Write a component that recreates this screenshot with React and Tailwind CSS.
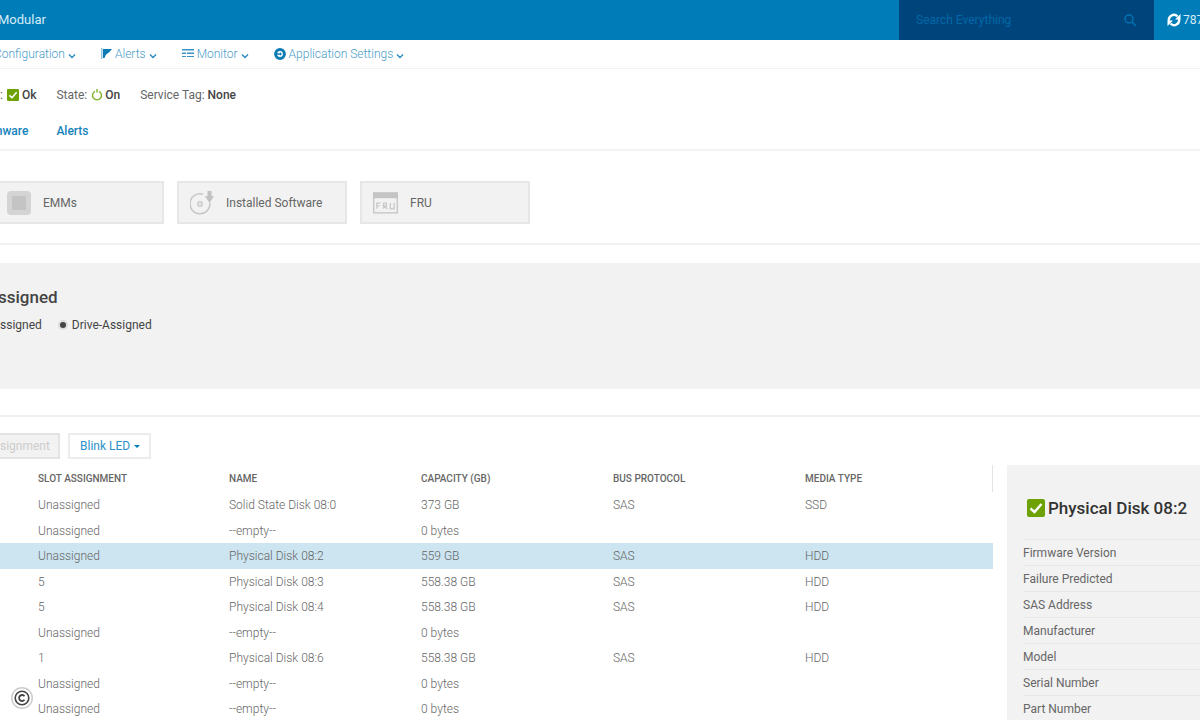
import { useState } from 'react';

const NAV_ITEMS = [
    { label: 'Configuration', icon: null },
    { label: 'Alerts', icon: 'flag' },
    { label: 'Monitor', icon: 'monitor' },
    { label: 'Application Settings', icon: 'settings' },
];

const COLUMNS = ['Slot Assignment', 'Name', 'Capacity (GB)', 'Bus Protocol', 'Media Type'];

const DISKS = [
    ['Unassigned', 'Solid State Disk 08:0', '373 GB', 'SAS', 'SSD'],
    ['Unassigned', '--empty--', '0 bytes', '', ''],
    ['Unassigned', 'Physical Disk 08:2', '559 GB', 'SAS', 'HDD'],
    ['5', 'Physical Disk 08:3', '558.38 GB', 'SAS', 'HDD'],
    ['5', 'Physical Disk 08:4', '558.38 GB', 'SAS', 'HDD'],
    ['Unassigned', '--empty--', '0 bytes', '', ''],
    ['1', 'Physical Disk 08:6', '558.38 GB', 'SAS', 'HDD'],
    ['Unassigned', '--empty--', '0 bytes', '', ''],
    ['Unassigned', '--empty--', '0 bytes', '', ''],
];

const DETAILS = [
    'Firmware Version',
    'Failure Predicted',
    'SAS Address',
    'Manufacturer',
    'Model',
    'Serial Number',
    'Part Number',
];

function NavIcon({ name }) {
    if (name === 'flag') {
        return (
            <svg className="w-[11px] h-3 mr-[3px]" viewBox="0 0 11 12" fill="#0a7bb5" aria-hidden="true">
                <path d="M0 0h1.5v11H0z" opacity=".45" />
                <path d="M2 1h9L8 4.5 5 6.5 3.5 10H2z" />
            </svg>
        );
    }
    if (name === 'monitor') {
        return (
            <svg className="w-3 h-3 mr-[3px]" viewBox="0 0 12 12" fill="#3a93c2" aria-hidden="true">
                <path d="M0 1h12v1.5H0zM0 4.5h4V6H0zM5 4.5h7V6H5zM0 8h4v1H0zM5 8h7v1H5z" />
            </svg>
        );
    }
    return (
        <svg className="w-3 h-3 mr-[3px]" viewBox="0 0 12 12" aria-hidden="true">
            <circle cx="6" cy="6" r="4.4" fill="#fff" stroke="#0a7bb5" strokeWidth="3" />
            <path d="M3 5.3h3V4.200L8 6 6 7.800V6.700H3z" fill="#0a7bb5" />
        </svg>
    );
}

function Chevron() {
    return (
        <svg className="w-2 h-2 ml-[3px] mt-1" viewBox="0 0 8 8" fill="none" stroke="#2a8abf" strokeWidth="1.4" aria-hidden="true">
            <path d="M1 2.5l3 3 3-3" />
        </svg>
    );
}

function OkIcon({ className }) {
    return (
        <svg className={className} viewBox="0 0 18 18" aria-hidden="true">
            <rect width="18" height="18" rx="2" fill="#6ea204" />
            <path d="M3.5 9.5l4 3.5 7-8" fill="none" stroke="#fff" strokeWidth="2.4" />
        </svg>
    );
}

function ChipIcon() {
    return (
        <svg className="size-6" viewBox="0 0 24 24" aria-hidden="true">
            <rect width="24" height="24" rx="4" fill="#d4d4d4" />
            <rect x="5" y="5" width="14" height="14" fill="#c4c4c4" />
        </svg>
    );
}

function DiscIcon() {
    return (
        <svg className="size-6" viewBox="0 0 24 24" fill="none" stroke="#c6c6c6" aria-hidden="true">
            <path d="M13 3.2A10 10 0 1 0 20 12" strokeWidth="1.5" />
            <circle cx="10" cy="13" r="2.3" strokeWidth="1.2" />
            <circle cx="10" cy="13" r=".8" fill="#c6c6c6" stroke="none" />
            <path d="M17.500 0h4v5H24l-4.500 7L15 5h2.500z" fill="#c2c2c2" stroke="none" />
        </svg>
    );
}

function FruIcon() {
    return (
        <svg className="w-[25px] h-[22px]" viewBox="0 0 26 22" fill="none" stroke="#c8c8c8" aria-hidden="true">
            <rect x=".75" y=".75" width="24.500" height="20.500" strokeWidth="1.5" />
            <path d="M0 0h26v6H0z" fill="#c4c4c4" stroke="none" />
            <path d="M4 17v-6h4M4 14h3M11 17v-6h3v3h-3l4 3M18 11v6h4v-6" strokeWidth="1.3" />
        </svg>
    );
}

const TILES = [
    { label: 'EMMs', Icon: ChipIcon },
    { label: 'Installed Software', Icon: DiscIcon },
    { label: 'FRU', Icon: FruIcon },
];

export default function App() {
    const [selected, setSelected] = useState(2);
    const [mode, setMode] = useState('drive');

    return (
        <div className="relative min-h-screen overflow-hidden bg-white text-xs text-[#666] font-['Roboto','Liberation_Sans',sans-serif]">
            <header className="flex h-10 bg-[#007db8] text-white">
                <div className="flex-1 flex items-center -ml-0.5 text-[13px] text-[#d5ecf7]">Modular</div>
                <label className="flex items-center w-[255px] pl-[17px] pr-[18px] bg-[#00447c]">
                    <input
                        type="search"
                        aria-label="Search Everything"
                        placeholder="Search Everything"
                        className="flex-1 min-w-0 bg-transparent outline-none text-white placeholder:text-[#0068a6]"
                    />
                    <svg className="size-3" viewBox="0 0 12 12" fill="none" stroke="#0076b4" strokeWidth="1.4" aria-hidden="true">
                        <circle cx="5" cy="5" r="4" />
                        <path d="M8 8l4 4" />
                    </svg>
                </label>
                <div className="flex items-center gap-0.5 w-[46px] pl-[13px] overflow-hidden whitespace-nowrap">
                    <svg className="size-3.5 shrink-0" viewBox="0 0 14 14" fill="none" stroke="#fff" strokeWidth="2.400" aria-hidden="true">
                        <path d="M2 8A5 5 0 0 1 10.500 3.500M12 6A5 5 0 0 1 3.500 10.500" />
                        <path d="M13.500 1v5.500H8zM.5 13V7.500H6z" fill="#fff" stroke="none" />
                    </svg>
                    <span className="text-[#d5ecf7]">787</span>
                </div>
            </header>

            <nav className="flex items-center gap-[25px] h-[29px] -ml-1.5 border-b border-[#f2f2f2]">
                {NAV_ITEMS.map((item) => (
                    <button key={item.label} type="button" className="flex items-center text-[#4a9cc9] font-light">
                        {item.icon && <NavIcon name={item.icon} />}
                        {item.label}
                        <Chevron />
                    </button>
                ))}
            </nav>

            <div className="flex items-center gap-5 h-[51px]">
                <span className="flex items-center">
                    : <OkIcon className="size-3 ml-1 mr-[3px]" />
                    <span className="font-medium text-[#444]">Ok</span>
                </span>
                <span className="flex items-center">
                    State:
                    <svg className="size-3 ml-1 mr-0.5" viewBox="0 0 12 12" fill="none" stroke="#7fb32a" strokeWidth="1.4" aria-hidden="true">
                        <path d="M4 2.300a4.500 4.500 0 1 0 4 0M6 0v3.500" />
                    </svg>
                    <span className="font-medium text-[#444]">On</span>
                </span>
                <span>
                    Service Tag: <span className="font-medium text-[#444]">None</span>
                </span>
            </div>

            <nav className="flex gap-7 h-[31px] pt-[3px] border-b-2 border-[#f4f4f4] font-medium text-[#1583ba]">
                <a href="#firmware" className="-ml-2">mware</a>
                <a href="#alerts">Alerts</a>
            </nav>

            <section className="pt-[30px] pb-[19px] border-b-2 border-[#f2f2f2]">
                <div className="flex gap-[13px] -ml-1.5">
                    {TILES.map(({ label, Icon }) => (
                        <button
                            key={label}
                            type="button"
                            className="flex items-center gap-3 w-[170px] h-[43px] pl-[11px] bg-[#f2f2f2] border-2 border-[#e6e6e6]"
                        >
                            <Icon />
                            {label}
                        </button>
                    ))}
                </div>
            </section>

            <section className="mt-[18px] h-[126px] bg-[#f2f2f2] pt-6 text-[#444]">
                <h2 className="text-[17px] leading-5 font-medium -ml-0.5">ssigned</h2>
                <div className="flex items-center gap-4 mt-2.5">
                    <label>
                        <input
                            type="radio"
                            name="mode"
                            className="sr-only"
                            checked={mode === 'chassis'}
                            onChange={() => setMode('chassis')}
                        />
                        ssigned
                    </label>
                    <label className="flex items-center gap-1">
                        <input
                            type="radio"
                            name="mode"
                            className="appearance-none size-2.5 rounded-full border-2 border-[#dcdcdc] bg-white checked:bg-[#444]"
                            checked={mode === 'drive'}
                            onChange={() => setMode('drive')}
                        />
                        Drive-Assigned
                    </label>
                </div>
            </section>

            <div className="flex gap-2 mt-[26px] pt-4 border-t-2 border-[#f0f0f0]">
                <button type="button" disabled className="h-[26px] w-[60px] pr-2.5 text-right border-2 border-l-0 border-[#e4e4e4] bg-[#f2f2f2] text-[#ccc]">
                    signment
                </button>
                <button type="button" className="flex items-center gap-1 h-[26px] w-[83px] pl-2.5 border-2 border-[#ececec] text-[#2a92c8]">
                    Blink LED
                    <svg className="w-1.5 h-[3px]" viewBox="0 0 8 4" fill="#007db8" aria-hidden="true">
                        <path d="M0 0h8L4 4z" />
                    </svg>
                </button>
            </div>

            <div className="flex gap-3.5 mt-1.5">
                <div className="flex-1">
                    <table className="w-full table-fixed text-left">
                        <thead>
                            <tr className="h-[27px] uppercase text-[10px]">
                                {COLUMNS.map((col) => (
                                    <th key={col} className="p-0 font-medium w-48 first:w-[229px] first:pl-[38px] last:w-auto last:border-r last:border-[#e4e4e4]">
                                        {col}
                                    </th>
                                ))}
                            </tr>
                        </thead>
                        <tbody>
                            {DISKS.map((disk, idx) => (
                                <tr
                                    key={idx}
                                    onClick={() => setSelected(idx)}
                                    className={`odd:h-[26px] even:h-[25px] ${selected === idx ? 'bg-[#cce5f1]' : ''}`}
                                >
                                    {disk.map((value, col) => (
                                        <td key={col} className="p-0 first:pl-[38px] font-light">{value}</td>
                                    ))}
                                </tr>
                            ))}
                        </tbody>
                    </table>
                </div>

                <aside className="w-[193px] bg-[#f2f2f2] pt-8 pl-4">
                    <h3 className="flex items-center gap-[3px] pl-1 mb-5 h-[22px] text-[17px] font-medium text-[#333] whitespace-nowrap">
                        <OkIcon className="size-[18px] shrink-0" />
                        Physical Disk 08:2
                    </h3>
                    <ul>
                        {DETAILS.map((label) => (
                            <li key={label} className="h-[26px] leading-[26px] border-t border-[#e6e6e6]">{label}</li>
                        ))}
                    </ul>
                </aside>
            </div>

            <svg className="absolute left-[11px] bottom-[13px] size-[22px]" viewBox="0 0 22 22" role="img" aria-label="Copyright">
                <circle cx="11" cy="11" r="11" fill="#999" opacity=".5" />
                <circle cx="11" cy="11" r="9.500" fill="#fff" />
                <circle cx="11" cy="11" r="6.800" fill="none" stroke="#444" strokeWidth="1.600" />
                <path d="M13.500 9.200a3 3 0 1 0 0 3.600" fill="none" stroke="#444" strokeWidth="1.800" />
            </svg>
        </div>
    );
}
